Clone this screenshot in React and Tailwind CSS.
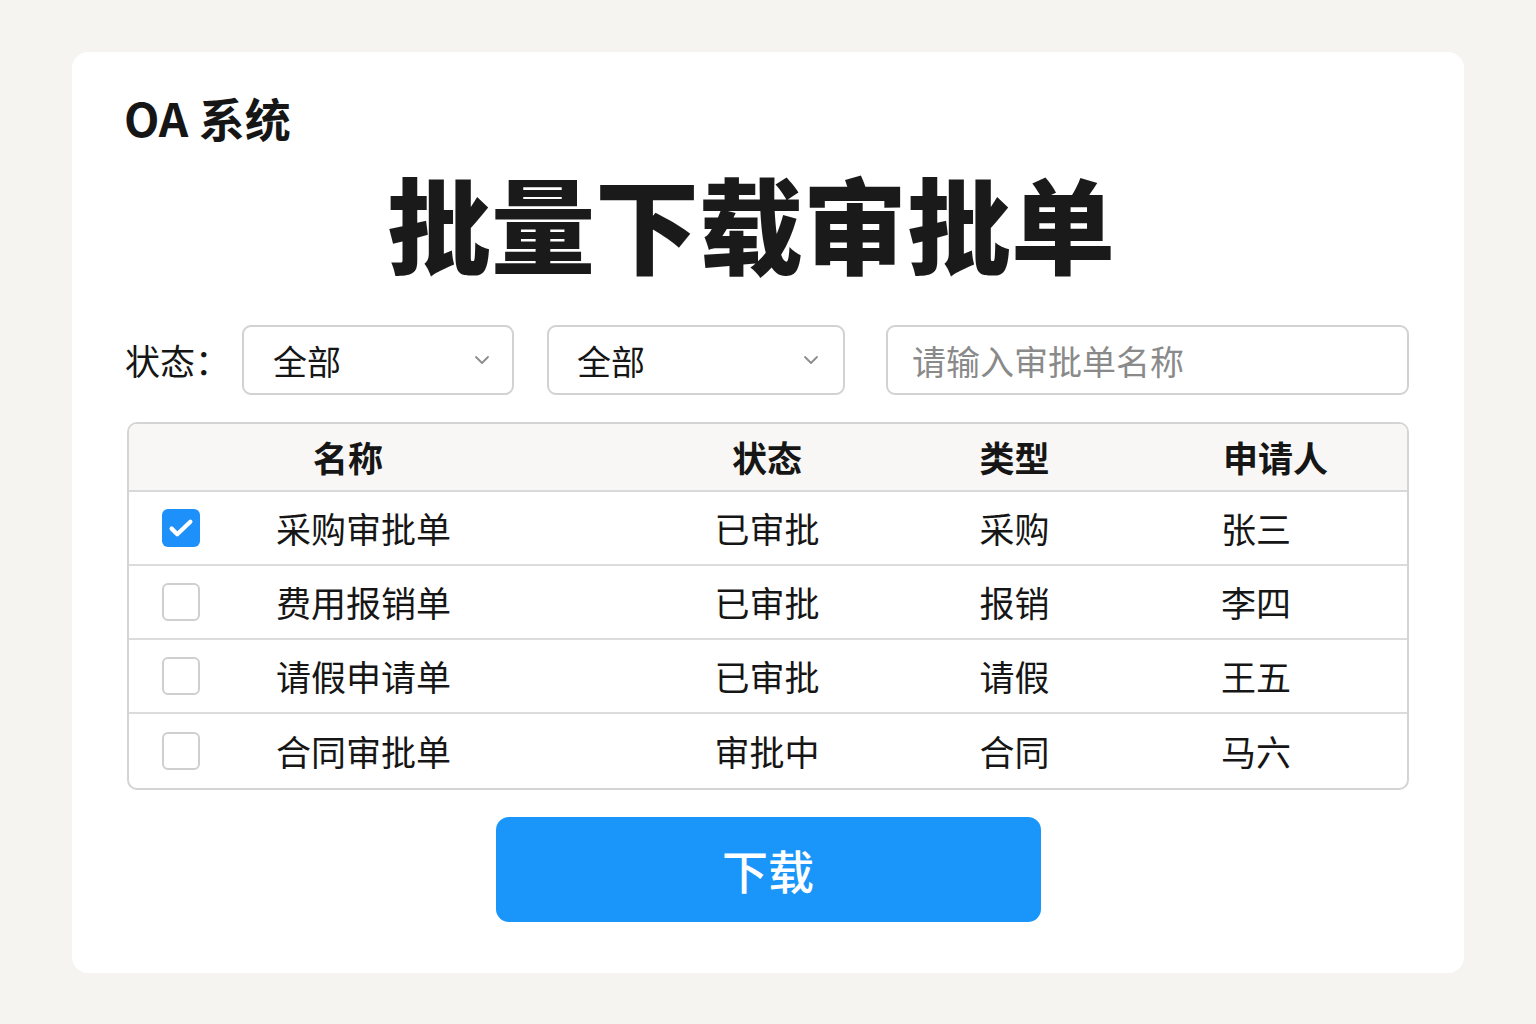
import React, { useState } from 'react'
import { ChevronDown } from 'lucide-react'

const rows = [
  { name: '采购审批单', status: '已审批', type: '采购', applicant: '张三' },
  { name: '费用报销单', status: '已审批', type: '报销', applicant: '李四' },
  { name: '请假申请单', status: '已审批', type: '请假', applicant: '王五' },
  { name: '合同审批单', status: '审批中', type: '合同', applicant: '马六' }
]

const font = { fontFamily: '"Noto Sans CJK SC", "Noto Sans", sans-serif' }

function Checkbox({ checked, onChange }) {
  return (
    <button
      type="button"
      onClick={onChange}
      className={
        checked
          ? 'w-[38px] h-[38px] rounded-[6px] bg-[#1e90fa] flex items-center justify-center'
          : 'w-[38px] h-[38px] rounded-[6px] border-2 border-[#cfcfcf] bg-white'
      }
    >
      {checked && (
        <svg width="30" height="30" viewBox="0 0 24 24" fill="none" stroke="white" strokeWidth="3.4" strokeLinecap="round" strokeLinejoin="round">
          <path d="M4.5 12.5l4.5 4.5L19.5 7" />
        </svg>
      )}
    </button>
  )
}

export default function App() {
  const [checked, setChecked] = useState([true, false, false, false])

  const toggle = (i) => {
    setChecked(prev => prev.map((c, j) => (j === i ? !c : c)))
  }

  return (
    <div className="min-h-screen bg-[#f5f4f1] pt-[52px] pl-[72px]" style={font}>
      <div className="w-[1392px] h-[921px] bg-white rounded-[16px] px-[55px] pt-[42px] text-[#161616]">
        <h1 className="text-[46px] leading-none font-bold ml-[-3px]">OA 系统</h1>

        <h2 className="mt-[30px] pr-[34px] text-[104px] leading-none font-black text-center text-[#1a1a1a]">
          批量下载审批单
        </h2>

        <div className="mt-[51px] flex items-center h-[70px]">
          <span className="text-[35px] ml-[-2px] w-[117px]">状态：</span>
          <div className="w-[272px] h-[70px] border-2 border-[#d2d2d2] rounded-[9px] flex items-center justify-between pl-[29px] pr-[18px]">
            <span className="text-[34px]">全部</span>
            <ChevronDown size={24} strokeWidth={1.8} className="text-[#8c8c8c]" />
          </div>
          <div className="ml-[33px] w-[298px] h-[70px] border-2 border-[#d2d2d2] rounded-[9px] flex items-center justify-between pl-[28px] pr-[20px]">
            <span className="text-[34px]">全部</span>
            <ChevronDown size={24} strokeWidth={1.8} className="text-[#8c8c8c]" />
          </div>
          <input
            placeholder="请输入审批单名称"
            className="ml-[41px] w-[523px] h-[70px] border-2 border-[#d2d2d2] rounded-[9px] pl-[24px] text-[34px] placeholder:text-[#8a8a8a] outline-none"
          />
        </div>

        <div className="mt-[27px] border-2 border-[#d4d4d4] rounded-[10px] overflow-hidden">
          <div className="flex items-center h-[68px] bg-[#f8f7f5] border-b-2 border-[#d9d9d9] text-[35px] font-bold">
            <div className="w-[150px]" />
            <div className="w-[363px] pl-[34px]">名称</div>
            <div className="w-[250px] text-center">状态</div>
            <div className="w-[245px] text-center">类型</div>
            <div className="flex-1 pl-[86px]">申请人</div>
          </div>
          {rows.map((r, i) => (
            <div
              key={r.name}
              className={
                i < rows.length - 1
                  ? 'flex items-center h-[74px] border-b-2 border-[#dcdcdc] text-[35px]'
                  : 'flex items-center h-[74px] text-[35px]'
              }
            >
              <div className="w-[150px] pl-[33px] flex items-center">
                <Checkbox checked={checked[i]} onChange={() => toggle(i)} />
              </div>
              <div className="w-[363px] ml-[-3px]">{r.name}</div>
              <div className="w-[250px] text-center ml-[3px]">{r.status}</div>
              <div className="w-[245px] text-center">{r.type}</div>
              <div className="flex-1 pl-[84px]">{r.applicant}</div>
            </div>
          ))}
        </div>

        <div className="mt-[27px] flex justify-center">
          <button className="w-[545px] h-[105px] bg-[#1a96fb] rounded-[13px] text-white text-[46px] font-medium">
            下载
          </button>
        </div>
      </div>
    </div>
  )
}
